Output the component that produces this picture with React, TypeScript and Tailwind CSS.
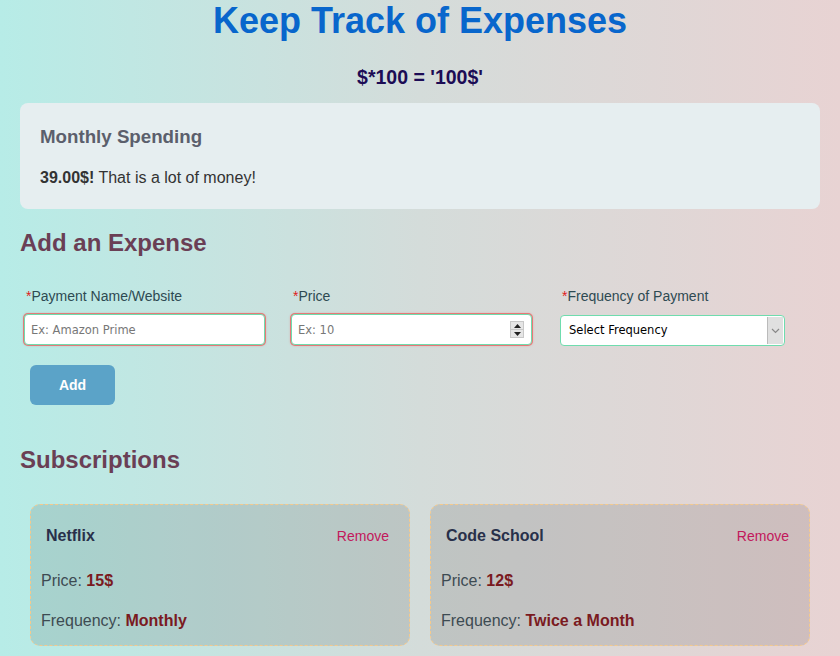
import React from "react";

const subscriptions = [
  { name: "Netflix", price: "15$", frequency: "Monthly" },
  { name: "Code School", price: "12$", frequency: "Twice a Month" },
];

const fields = [
  { label: "Payment Name/Website", placeholder: "Ex: Amazon Prime", spinner: false },
  { label: "Price", placeholder: "Ex: 10", spinner: true },
];

const App: React.FC = () => {
  return (
    <div className="min-h-screen bg-[linear-gradient(to_right,#b7ece7,#d4dcda_50%,#e8d3d3)] px-5 pb-3 font-['Liberation_Sans',Arial,sans-serif]">
      <h1 className="text-center text-[36px] leading-[41px] font-bold text-[#0866cc]">
        Keep Track of Expenses
      </h1>
      <p className="mt-[25px] text-center text-[19.5px] leading-[22px] font-bold text-[#1c0c55]">
        $*100 = '100$'
      </p>

      <div className="mt-[15px] rounded-lg bg-[#e6eef0] px-5 pt-[23px] pb-[22px]">
        <h3 className="text-[18.72px] leading-[22px] font-bold text-[#5b5f6c]">
          Monthly Spending
        </h3>
        <p className="mt-[21px] text-[16px] leading-[18px] text-[#333]">
          <span className="font-bold">39.00$!</span> That is a lot of money!
        </p>
      </div>

      <h2 className="mt-5 text-[24px] leading-[28px] font-bold text-[#6a3f55]">
        Add an Expense
      </h2>

      <div className="mt-[31px] flex gap-[26px] pl-1">
        {fields.map((f) => (
          <div key={f.label} className="flex w-[241px] flex-col">
            <label className="pl-0.5 text-[14px] leading-[16px] text-[#2e4a52]">
              <span className="text-[#e02020]">*</span>
              {f.label}
            </label>
            <div className="relative mt-[10px]">
              <input
                type="text"
                placeholder={f.placeholder}
                className="h-[31px] w-full rounded-[4px] border border-[#6fdcae] bg-white px-[6px] font-['DejaVu_Sans',sans-serif] text-[11.5px] text-black shadow-[0_0_0_1px_rgba(236,96,96,0.75),0_0_2px_1px_rgba(236,96,96,0.35)] outline-none placeholder:text-[#777]"
              />
              {f.spinner && (
                <div className="absolute top-[7px] right-[8px] flex h-[17px] w-[14px] flex-col border border-[#c8c8c8] bg-[#e6e6e6]">
                  <div className="flex flex-1 items-center justify-center border-b border-[#c8c8c8]">
                    <svg width="7" height="4" viewBox="0 0 7 4">
                      <path d="M0 4 L3.5 0 L7 4 Z" fill="#222" />
                    </svg>
                  </div>
                  <div className="flex flex-1 items-center justify-center">
                    <svg width="7" height="4" viewBox="0 0 7 4">
                      <path d="M0 0 L3.5 4 L7 0 Z" fill="#222" />
                    </svg>
                  </div>
                </div>
              )}
            </div>
          </div>
        ))}
        <div className="flex w-[227px] flex-col pl-0.5">
          <label className="pl-0.5 text-[14px] leading-[16px] text-[#2e4a52]">
            <span className="text-[#e02020]">*</span>
            Frequency of Payment
          </label>
          <div className="relative mt-[11px]">
            <select
              defaultValue=""
              className="h-[31px] w-full appearance-none rounded-[4px] border border-[#6fdcae] bg-white pl-2 font-['DejaVu_Sans',sans-serif] text-[11.5px] text-black outline-none"
            >
              <option value="">Select Frequency</option>
              <option value="monthly">Monthly</option>
              <option value="twice">Twice a Month</option>
            </select>
            <div className="pointer-events-none absolute top-[2px] right-[2px] flex h-[27px] w-[16px] items-center justify-center border-l border-[#bbb] bg-[#e0e0e0]">
              <svg width="9" height="6" viewBox="0 0 9 6">
                <path d="M1 1 L4.5 4.5 L8 1" fill="none" stroke="#888" strokeWidth="1.2" />
              </svg>
            </div>
          </div>
        </div>
      </div>

      <button className="mt-[19px] ml-[10px] h-10 w-[85px] rounded-md bg-[#5ba3c8] text-[14px] font-bold text-white">
        Add
      </button>

      <h2 className="mt-[41px] text-[24px] leading-[28px] font-bold text-[#6a3f55]">
        Subscriptions
      </h2>

      <div className="mt-[30px] flex gap-5 pl-[10px]">
        {subscriptions.map((s) => (
          <div
            key={s.name}
            className="h-[142px] w-[380px] rounded-[10px] border border-dashed border-[#f5c98c] bg-black/10 pt-[21px] pr-5 pl-[10px]"
          >
            <div className="flex items-center justify-between pl-[5px]">
              <span className="text-[16px] leading-[20px] font-bold text-[#28304a]">{s.name}</span>
              <span className="text-[14px] leading-[20px] text-[#c2185b]">Remove</span>
            </div>
            <p className="mt-[26px] text-[16px] leading-[18px] text-[#3d4b52]">
              Price: <span className="font-bold text-[#7a1a1f]">{s.price}</span>
            </p>
            <p className="mt-[22px] text-[16px] leading-[18px] text-[#3d4b52]">
              Frequency: <span className="font-bold text-[#7a1a1f]">{s.frequency}</span>
            </p>
          </div>
        ))}
      </div>
    </div>
  );
};

export default App;
